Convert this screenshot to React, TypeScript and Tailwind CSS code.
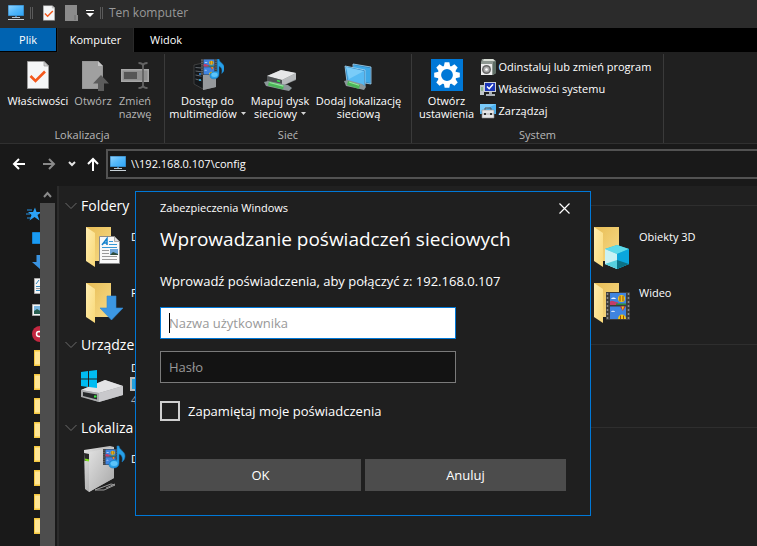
import React from 'react';

type IconProps = { className?: string };

/* ---------- Shared glyphs ---------- */

function Monitor({ className }: IconProps) {
  return (
    <svg viewBox="0 0 16 16" className={className} aria-hidden="true">
      <defs>
        <linearGradient id="screen" x1="0" y1="0" x2="1" y2="1">
          <stop offset="0" stopColor="#8fd3ff" />
          <stop offset="0.5" stopColor="#52b8fb" />
          <stop offset="1" stopColor="#2ea4f5" />
        </linearGradient>
      </defs>
      <path d="M0 0h16v11H0z" fill="#2b6ea3" />
      <path d="M.5 .5h15v10H.5z" fill="url(#screen)" />
      <path d="M7 11h2v1.5H7z" fill="#3d7fb0" />
      <path d="M4 12h8v1H4z" fill="#b7c4cc" />
      <path d="M0 14h16v1H0z" fill="#c9d2d8" />
    </svg>
  );
}

function CheckedPage({ className }: IconProps) {
  return (
    <svg viewBox="0 0 22 28" className={className} aria-hidden="true">
      <path d="M.5 .5H17l4.500 4.500V27.500H.5z" fill="#f5f6f7" stroke="#9a9a9a" />
      <path d="M17 .5V5h4.500z" fill="#cfcfcf" stroke="#9a9a9a" strokeWidth=".7" />
      <path d="M3.500 15l5 5 9.500-9.500" fill="none" stroke="#f4581c" strokeWidth="2.600" />
    </svg>
  );
}

function MusicNote({ x, y, s }: { x: number; y: number; s: number }) {
  return (
    <g transform={`translate(${x} ${y}) scale(${s})`}>
      <path
        d="M8 0h2c0 4 6 5 6 10 0 3-1.500 5-3 6 1-4 0-7-3-8v9c0 3-2 5-5.500 5C2 22 0 21 0 18.500 0 16 2.500 14 6 14c1 0 1.500 0 2 .3z"
        fill="#27a0e8"
        stroke="#1477bd"
        strokeWidth=".6"
      />
      <ellipse cx="5" cy="17.500" rx="3.500" ry="2.500" fill="#5cc4fa" />
    </g>
  );
}

function FilmStrip({ x, y, w, h }: { x: number; y: number; w: number; h: number }) {
  return (
    <svg x={x} y={y} width={w} height={h} viewBox="0 0 24 28" preserveAspectRatio="none">
      <path d="M0 0h24v28H0z" fill="#3c3c3c" />
      <path d="M1.500 1v27M22.500 1v27" stroke="#8b8b8b" strokeWidth="1.500" strokeDasharray="2 2" />
      <path d="M4 1h16v12H4zM4 14.500h16V27H4z" fill="#3f84e0" />
      <path d="M4 9.500c2-2 4 0 8 1v2.500H4z" fill="#c33d6a" />
      <path d="M10 11.500h10V13H10z" fill="#2d8a3b" />
      <path d="M5 7c1-2 4-2 5 0z" fill="#e8f2ff" />
      <circle cx="15.500" cy="6.500" r="3.500" fill="#f1c518" />
      <path d="M14 3.800v5.400M17 3.800v5.400" stroke="#8a3a10" strokeWidth=".9" />
      <path d="M14 14.500h5.500l-2.700 4.500z" fill="#c92a2a" />
      <path d="M15.500 14.500h2.500l-1.200 4z" fill="#f1c518" />
      <path d="M12 27c0-6 8-6 8 0z" fill="#f1c518" />
      <path d="M14.500 23.500V27M17.500 23.500V27" stroke="#8a3a10" strokeWidth=".9" />
      <path d="M5 20c1-2 4-1 4 0z" fill="#cfe2fb" />
    </svg>
  );
}

/* ---------- Ribbon icons (32 x 32) ---------- */

function RibbonSvg({ children }: { children: React.ReactNode }) {
  return (
    <svg viewBox="0 0 32 32" className="size-8 shrink-0" aria-hidden="true">
      {children}
    </svg>
  );
}

const PropertiesIcon = () => (
  <span className="flex h-8 items-start pt-0.5">
    <CheckedPage className="h-7 w-[22px]" />
  </span>
);

const OpenIcon = () => (
  <RibbonSvg>
    <path d="M5 2h16l5 5v23H5z" fill="#8c8c8c" />
    <path d="M5.500 2.500H21V7h4.500v22.500h-20z" fill="#a0a0a0" />
    <path d="M21 2v5h5z" fill="#c6c6c6" />
    <path d="M24 16l8 8.500h-5V32h-6v-7.500h-5z" fill="#5c5c5c" />
  </RibbonSvg>
);

const RenameIcon = () => (
  <RibbonSvg>
    <path d="M2 10h28v13H2z" fill="#a8a8a8" />
    <path d="M3.500 11.500h25v10h-25z" fill="#909090" />
    <path d="M5 13h13v7H5z" fill="#565656" />
    <path d="M19.500 4c3 0 4.500 1 4.500 3 0-2 1.500-3 4.500-3M24 6v21M19.500 29c3 0 4.500-1 4.500-3 0 2 1.500 3 4.500 3" fill="none" stroke="#646464" strokeWidth="1.800" />
  </RibbonSvg>
);

const MediaIcon = () => (
  <RibbonSvg>
    <path d="M2 6l9-2v26L2 25z" fill="#15181b" stroke="#555" strokeWidth=".6" />
    <path d="M11 4l13 1v23l-13 3z" fill="#777a7d" />
    <path d="M11 16l13-1v13l-13 3z" fill="#96999c" />
    <path d="M3.500 8.500l6 .5M3.500 12l6 .8M3.500 16l6 1.200M3.500 20l6 1.800" stroke="#62686e" />
    <circle cx="8" cy="21" r="1" fill="#2dbcf5" />
    <circle cx="8" cy="15" r="1" fill="#2d8ff5" />
    <FilmStrip x={9} y={0} w={16} h={16} />
    <MusicNote x={18} y={0} s={0.9} />
  </RibbonSvg>
);

const MapDriveIcon = () => (
  <RibbonSvg>
    <path d="M3 17l14-6 15 3v7l-14 6-15-4z" fill="#8c8f91" />
    <path d="M3 17l14-6 15 3-14 7z" fill="#e6e7e8" />
    <path d="M3 17l15 4v6L3 23z" fill="#4f5254" />
    <path d="M18 21l14-7v6l-14 7z" fill="#b7babc" />
    <path d="M13 21.500l3 1" stroke="#34e34a" strokeWidth="1.500" />
    <path d="M0 23l4-1 20 4 4 3-3 3-5-1-18-4z" fill="#8c979a" />
    <path d="M5 22.500l15 4-1 4-15-4z" fill="#4bb558" />
    <path d="M5.500 23.500l14 3.600" stroke="#93e79b" strokeWidth="1.200" />
  </RibbonSvg>
);

const AddLocationIcon = () => (
  <RibbonSvg>
    <path d="M10 5l18 3v17l-18-3z" fill="#2a79b3" stroke="#a5d8f5" strokeWidth=".8" />
    <path d="M11 6l16 3v15l-16-4z" fill="#3ea8e6" />
    <path d="M2 7l20 4v17L4 23z" fill="#2a79b3" stroke="#a5d8f5" strokeWidth=".8" />
    <path d="M3 8l18 4v14L5 22z" fill="#56baf3" />
    <path d="M3 8l18 4-15 8z" fill="#7accf8" />
    <path d="M1 22l4-1 14 4 4 3-2 3-4-1-14-3z" fill="#8c979a" />
    <path d="M5 22l12 4-1 4-12-4z" fill="#4bb558" />
    <path d="M6 23l10 3.300" stroke="#93e79b" strokeWidth="1.200" />
  </RibbonSvg>
);

const SettingsIcon = () => (
  <RibbonSvg>
    <path d="M0 0h32v32H0z" fill="#0078d7" />
    <g transform="translate(16 16)" fill="#fff">
      {[0, 45, 90, 135, 180, 225, 270, 315].map((a) => (
        <path key={a} d="M-3.200-8.500L-2.300-12.800h4.600L3.200-8.500z" transform={`rotate(${a})`} />
      ))}
    </g>
    <circle cx="16" cy="16" r="7.700" fill="none" stroke="#fff" strokeWidth="3.600" />
  </RibbonSvg>
);

const UninstallIcon = () => (
  <svg viewBox="0 0 16 16" className="size-4 shrink-0" aria-hidden="true">
    <path d="M2 0h11l3 2v12l-3 2H1V3z" fill="#8d9690" />
    <path d="M4 0h9l2 2H3z" fill="#d9ded6" />
    <path d="M13 3l3-1v12l-3 2z" fill="#5f6e66" />
    <path d="M1 5h11v11H1z" fill="#ededed" />
    <circle cx="6.500" cy="10.500" r="4.500" fill="#666" />
    <circle cx="6.500" cy="10.500" r="3" fill="#aaa" />
    <circle cx="6.500" cy="10.500" r="1.300" fill="#fff" />
  </svg>
);

const SystemIcon = () => (
  <svg viewBox="0 0 16 16" className="size-4 shrink-0" aria-hidden="true">
    <path d="M0 4h4v10H0z" fill="#bfc5c9" />
    <path d="M1 7h2M1 9h2" stroke="#59a847" />
    <path d="M4 1h12v10H4z" fill="#c9ced6" />
    <path d="M5 2h10v8H5z" fill="#1a35b8" />
    <path d="M7 5.500l2.200 2.200L13 3.300" fill="none" stroke="#fff" strokeWidth="1.500" />
    <path d="M9 11h3v2H9zM6 13h9v2H6z" fill="#aab0b6" />
  </svg>
);

const ManageIcon = () => (
  <svg viewBox="0 0 16 16" className="size-4 shrink-0" aria-hidden="true">
    <path d="M0 1h16v10H0z" fill="#4cb2f3" />
    <path d="M0 1h16L0 9z" fill="#79cafa" />
    <path d="M5 7V5h6v2" fill="none" stroke="#555" />
    <path d="M2 7h12v8H2z" fill="#e5e6e7" stroke="#8e8e8e" strokeWidth=".6" />
    <path d="M4 10h2v2H4zM10 10h2v2h-2z" fill="#333" />
    <path d="M2 11h2M6 11h4M12 11h2" stroke="#8c8c8c" strokeWidth=".6" />
  </svg>
);

/* ---------- Content icons (48 x 48) ---------- */

function Folder({ children }: { children?: React.ReactNode }) {
  return (
    <svg viewBox="0 0 48 48" className="size-12 shrink-0" aria-hidden="true">
      <defs>
        <linearGradient id="folderBack" x1="0" y1="0" x2="1" y2="1">
          <stop offset="0" stopColor="#e8bd55" />
          <stop offset="1" stopColor="#f7db89" />
        </linearGradient>
        <linearGradient id="folderFront" x1="0" y1="0" x2="1" y2="1">
          <stop offset="0" stopColor="#ffedb0" />
          <stop offset="1" stopColor="#f9d978" />
        </linearGradient>
      </defs>
      <path d="M6 4h25v34H6z" fill="url(#folderBack)" />
      <path d="M6 4l9 6v34l-9-6z" fill="url(#folderFront)" />
      {children}
    </svg>
  );
}

const DocumentsIcon = () => (
  <Folder>
    <path d="M19.500 13.500h15l5 5v22h-20z" fill="#f8f8f8" stroke="#8b8b8b" />
    <path d="M34.500 13.500v5h5z" fill="#ddd" stroke="#8b8b8b" strokeWidth=".7" />
    <path d="M22 22l5-6.500V22M23.500 20H27" fill="none" stroke="#1180cc" strokeWidth="1.500" />
    <path d="M29 18.500h4M29 21.500h8M22 24.500h15" stroke="#3597d4" />
    <path d="M22 27.500h7M22 30.500h7M22 33.500h15M22 36.500h15" stroke="#999" />
    <path d="M30 26h8v6h-8z" fill="#6fa6da" />
    <path d="M30 32l3-3 5 2v1z" fill="#2d4c3c" />
  </Folder>
);

const DownloadsIcon = () => (
  <Folder>
    <path d="M27 17h9v12h7L31.500 41 20 29h7z" fill="#3c97e3" stroke="#2f86d3" strokeWidth=".6" />
  </Folder>
);

const ObjectsIcon = () => (
  <Folder>
    <path d="M17 26l12-4 12 4v15l-12 5-12-5z" fill="#22b4cf" />
    <path d="M17 26l12-4 12 4-12 5z" fill="#5edaea" />
    <path d="M17 26l12 5v15l-12-5z" fill="#c9f1f4" />
    <path d="M29 31l12-5v15l-12 5z" fill="#0aa6dd" />
    <path d="M17 41l12-4v9z" fill="#56cfde" />
    <path d="M29 37l12 4-12 5z" fill="#0b7286" />
  </Folder>
);

const VideosIcon = () => (
  <Folder>
    <FilmStrip x={18} y={13} w={24} h={28} />
  </Folder>
);

const DriveIcon = () => (
  <svg viewBox="0 0 48 48" className="size-12 shrink-0" aria-hidden="true">
    <path d="M1 30l24-10 18 6v9L19 42 1 36z" fill="#9b9d9e" />
    <path d="M1 30l24-10 18 6-24 7z" fill="#e3e3e5" />
    <path d="M19 33l24-7v9l-24 7z" fill="#c9c9cc" />
    <path d="M1 30l18 3v9L1 37z" fill="#aaabad" />
    <path d="M3 32l14 2.500v5L3 36z" fill="#27292b" />
    <path d="M14 36.500h2.500" stroke="#38ed42" strokeWidth="2" />
    <path d="M1 12l7-1v7.500H1zM9 11l8-1v8.500H9zM1 19.500h7V27l-7-1zM9 19.500h8V28l-8-1z" fill="#00bcf2" />
  </svg>
);

const MediaServerIcon = () => (
  <svg viewBox="0 0 48 48" className="size-12 shrink-0" aria-hidden="true">
    <defs>
      <linearGradient id="server" x1="0" y1="0" x2="1" y2="1">
        <stop offset="0" stopColor="#e3e3e3" />
        <stop offset="1" stopColor="#8d8d8d" />
      </linearGradient>
      <linearGradient id="serverFace" x1="0" y1="0" x2="1" y2="1">
        <stop offset="0" stopColor="#e2e2e2" />
        <stop offset="1" stopColor="#a6a6a6" />
      </linearGradient>
    </defs>
    <path d="M15 45l16-6 4 1-11 5zM26 43l9-4" fill="none" stroke="#9b9b9b" />
    <path d="M4 5l26-4 4 1v31L9 47l-4-3z" fill="url(#server)" />
    <path d="M9 7l25-5v31L9 47z" fill="url(#serverFace)" />
    <path d="M4 8l5 1v7H4.500z" fill="#292929" />
    <path d="M5 14.500l4 1" stroke="#81e51f" strokeWidth="2" />
    <FilmStrip x={23} y={4} w={15} h={16} />
    <MusicNote x={29} y={1} s={1} />
  </svg>
);

/* ---------- Title bar and tabs ---------- */

const Grip = () => <span className="h-3 w-[3px] border-x border-[#5a5a5a]" />;

function TitleBar() {
  return (
    <header className="flex h-7 shrink-0 items-center bg-[#2b2b2b] pb-0.5 pl-2 text-[#999]">
      <Monitor className="mr-1.5 size-4" />
      <Grip />
      <button aria-label="Właściwości" className="ml-2.5">
        <CheckedPage className="h-4 w-3" />
      </button>
      <button aria-label="Nowy folder" className="ml-2.5">
        <svg viewBox="0 0 13 16" className="h-4 w-[13px]">
          <path d="M0 0h12v10h1v6H0z" fill="#8b8b8b" />
          <path d="M10 10v5" stroke="#6d6d6d" />
        </svg>
      </button>
      <button aria-label="Dostosuj pasek narzędzi" className="ml-2">
        <svg viewBox="0 0 8 8" className="size-2">
          <path d="M0 1.500h8" stroke="#fff" />
          <path d="M0 4h8L4 8z" fill="#fff" />
        </svg>
      </button>
      <span className="mx-1.5 flex">
        <Grip />
      </span>
      <h1 className="text-xs leading-4">Ten komputer</h1>
    </header>
  );
}

function Tabs() {
  return (
    <nav className="flex h-6 shrink-0 bg-black text-[11px] leading-6">
      <button className="h-[23px] w-14 bg-[#0063b1]">Plik</button>
      <button className="ml-px w-[77px] border-x border-[#2a2a2a] bg-[#202020]">Komputer</button>
      <button className="w-16">Widok</button>
    </nav>
  );
}

/* ---------- Ribbon ---------- */

type BigButtonProps = {
  icon: React.ReactNode;
  lines: string[];
  width: string;
  menu?: boolean;
  disabled?: boolean;
};

function BigButton({ icon, lines, width, menu, disabled }: BigButtonProps) {
  return (
    <button
      disabled={disabled}
      className={`flex flex-col items-center whitespace-nowrap pt-[3px] ${width} ${disabled ? 'text-[#b5b5b5]' : 'text-white'}`}
    >
      {icon}
      <span className="mt-[3px] flex flex-col items-center leading-[13px]">
        {lines.map((line, i) => (
          <span key={line} className="flex items-center gap-1">
            {line}
            {menu && i === lines.length - 1 && (
              <svg viewBox="0 0 5 3" className="h-[3px] w-[5px]" aria-hidden="true">
                <path d="M0 0h5L2.500 3z" fill="#d5d5d5" />
              </svg>
            )}
          </span>
        ))}
      </span>
    </button>
  );
}

function SmallButton({ icon, label }: { icon: React.ReactNode; label: string }) {
  return (
    <button className="flex h-[22px] items-center gap-[3px] whitespace-nowrap">
      {icon}
      {label}
    </button>
  );
}

function RibbonGroup({ label, width, children }: { label: string; width: string; children: React.ReactNode }) {
  return (
    <section className={`flex shrink-0 flex-col border-r border-[#3a3a3a] ${width}`}>
      <div className="flex h-[74px] justify-center pr-1 pt-0.5">{children}</div>
      <h2 className="text-center leading-4 text-[#b8b8b8]">{label}</h2>
    </section>
  );
}

function Ribbon() {
  return (
    <div className="flex h-[92px] shrink-0 border-b border-[#303030] bg-[#202020] pt-0.5 text-[11px]">
      <RibbonGroup label="Lokalizacja" width="w-[165px]">
        <BigButton icon={<PropertiesIcon />} lines={['Właściwości']} width="w-[68px]" />
        <BigButton icon={<OpenIcon />} lines={['Otwórz']} width="w-[42px]" disabled />
        <BigButton icon={<RenameIcon />} lines={['Zmień', 'nazwę']} width="w-[42px]" disabled />
      </RibbonGroup>
      <RibbonGroup label="Sieć" width="w-[247px]">
        <BigButton icon={<MediaIcon />} lines={['Dostęp do', 'multimediów']} width="w-[79px]" menu />
        <BigButton icon={<MapDriveIcon />} lines={['Mapuj dysk', 'sieciowy']} width="w-[66px]" menu />
        <BigButton icon={<AddLocationIcon />} lines={['Dodaj lokalizację', 'sieciową']} width="w-[91px]" />
      </RibbonGroup>
      <RibbonGroup label="System" width="w-[252px]">
        <BigButton icon={<SettingsIcon />} lines={['Otwórz', 'ustawienia']} width="w-[66px]" />
        <div className="flex w-[178px] flex-col">
          <SmallButton icon={<UninstallIcon />} label="Odinstaluj lub zmień program" />
          <SmallButton icon={<SystemIcon />} label="Właściwości systemu" />
          <SmallButton icon={<ManageIcon />} label="Zarządzaj" />
        </div>
      </RibbonGroup>
    </div>
  );
}

/* ---------- Address bar ---------- */

function AddressBar() {
  return (
    <div className="flex h-[42px] shrink-0 items-center bg-[#191919] pb-0.5 pl-3">
      <button aria-label="Wstecz">
        <svg viewBox="0 0 14 14" className="size-3.5" fill="none" stroke="#fff" strokeWidth="2">
          <path d="M13 7H2M7 2L2 7l5 5" />
        </svg>
      </button>
      <button aria-label="Do przodu" className="ml-4">
        <svg viewBox="0 0 14 14" className="size-3.5" fill="none" stroke="#8a8a8a" strokeWidth="2">
          <path d="M1 7h11M7 2l5 5-5 5" />
        </svg>
      </button>
      <button aria-label="Ostatnie lokalizacje" className="ml-3">
        <svg viewBox="0 0 8 8" className="size-2" fill="none" stroke="#e5e5e5" strokeWidth="2">
          <path d="M1 2l3 3 3-3" />
        </svg>
      </button>
      <button aria-label="W górę" className="ml-2.5">
        <svg viewBox="0 0 14 14" className="size-3.5" fill="none" stroke="#fff" strokeWidth="2">
          <path d="M7 14V2M2 7l5-5 5 5" />
        </svg>
      </button>
      <div className="ml-1.5 flex h-[30px] flex-1 items-center gap-[5px] border-2 border-r-0 border-[#525252] pl-0.5">
        <Monitor className="size-4 shrink-0" />
        <input
          aria-label="Adres"
          defaultValue="\\192.168.0.107\config"
          className="min-w-0 flex-1 bg-transparent text-[11px] leading-4 outline-none"
        />
      </div>
    </div>
  );
}

/* ---------- Navigation tree ---------- */

const treeIcons: React.ReactNode[] = [
  <g key="a">
    <path d="M11 1.500l1.500 4.500H18l-4.500 3 2 5.500-5-3.500-5 3.500 2-5.500L4 6h5z" fill="#2ba3f7" />
    <path d="M3 4h5M2 8h4M3 12h4" stroke="#2493e4" />
  </g>,
  <path key="b" d="M8.500 2.500h12v11h-12z" fill="#1a9bf3" stroke="#1483d3" />,
  <path key="c" d="M12.500 1h7v7h4L16 15 8 8h4.500z" fill="#3a93e0" />,
  <g key="d">
    <path d="M10.500 .5H22v15H10.500z" fill="#f4f4f4" stroke="#aaa" />
    <path d="M12 6l3-4M12 8.500h6M12 12.500h6" stroke="#3187bd" />
    <path d="M12 10.500h6" stroke="#999" />
  </g>,
  <g key="e">
    <path d="M8.500 2.500H22v11H8.500z" fill="#f4f4f4" stroke="#aaa" />
    <path d="M10 4h8v8h-8z" fill="#78b5e0" />
    <path d="M10 9l3-2 5 3v2h-8z" fill="#295e50" />
  </g>,
  <g key="f">
    <circle cx="16" cy="8" r="8" fill="#c42740" />
    <circle cx="15" cy="8" r="2.500" fill="none" stroke="#fff" strokeWidth="1.500" />
  </g>,
];

const treeFolder = (
  <g>
    <path d="M10 0h12v16H10z" fill="#f5c83f" />
    <path d="M11 1.500h11v13H11z" fill="#ffe694" />
  </g>
);

function NavigationTree() {
  const rows = [...treeIcons, ...Array.from({ length: 8 }, () => treeFolder)];
  return (
    <aside className="flex w-[55px] shrink-0 bg-[#191919]">
      <ul className="w-10 overflow-hidden pl-6 pt-4">
        {rows.map((icon, i) => (
          <li key={i} className="flex h-6 items-center">
            <svg viewBox="0 0 16 16" className="size-4 shrink-0 overflow-visible" aria-hidden="true">
              {icon}
            </svg>
          </li>
        ))}
      </ul>
      <div className="flex w-[15px] flex-col">
        <svg viewBox="0 0 15 17" className="h-[17px] w-[15px]" fill="none" stroke="#8a8a8a" strokeWidth="2" aria-hidden="true">
          <path d="M4 11l3.500-4 3.500 4" />
        </svg>
        <div className="flex-1 bg-[#4d4d4d]" />
      </div>
    </aside>
  );
}

/* ---------- Folder view ---------- */

function Group({ title, children }: { title: string; children: React.ReactNode }) {
  return (
    <section>
      <h2 className="flex h-[27px] items-center gap-1 text-[14px] leading-5">
        <svg viewBox="0 0 12 8" className="h-2 w-3" fill="none" stroke="#6a6a6a" aria-hidden="true">
          <path d="M.5 1L6 6.500 11.500 1" />
        </svg>
        {title}
        <span className="ml-2 h-px flex-1 bg-[#2e2e2e]" />
      </h2>
      <div className="grid grid-cols-[254px_254px_1fr] pl-3">{children}</div>
    </section>
  );
}

function Tile({ icon, label, place = 'col-start-1' }: { icon: React.ReactNode; label: string; place?: string }) {
  return (
    <div className={`flex h-14 gap-[3px] pl-[3px] pt-1 text-[11px] leading-4 ${place}`}>
      {icon}
      <span className="pt-1.5">{label}</span>
    </div>
  );
}

function FolderView() {
  return (
    <main className="ml-0.5 min-w-0 flex-1 overflow-hidden border-l-2 border-[#2b2b2b] bg-[#202020] pl-1.5 pt-1.5">
      <Group title="Foldery">
        <Tile icon={<DocumentsIcon />} label="D" />
        <Tile icon={<ObjectsIcon />} label="Obiekty 3D" place="col-start-3" />
        <Tile icon={<DownloadsIcon />} label="P" />
        <Tile icon={<VideosIcon />} label="Wideo" place="col-start-3" />
      </Group>
      <Group title="Urządze">
        <div className="flex h-14 gap-[3px] pl-[3px] pt-0.5 text-[11px] leading-4">
          <DriveIcon />
          <div className="flex flex-col">
            <span>D</span>
            <span className="-ml-px my-px h-[14px] w-48 border-2 border-[#bcbcbc] bg-[#26a0da]" />
            <span className="text-[#a8a8a8]">4</span>
          </div>
        </div>
      </Group>
      <Group title="Lokaliza">
        <Tile icon={<MediaServerIcon />} label="D" />
      </Group>
    </main>
  );
}

/* ---------- Credentials dialog ---------- */

function CredentialsDialog() {
  return (
    <form
      role="dialog"
      aria-labelledby="dialog-title"
      onSubmit={(e) => e.preventDefault()}
      className="absolute left-[135px] top-[191px] w-[456px] border border-[#0078d7] bg-[#1f1f1f] px-6 pb-6 text-[13px] leading-5"
    >
      <div className="-mr-3 flex h-8 items-center justify-between text-[11px]">
        <span>Zabezpieczenia Windows</span>
        <button type="button" aria-label="Zamknij" className="p-2">
          <svg viewBox="0 0 11 11" className="size-[11px]" stroke="#fff" strokeWidth="1.200">
            <path d="M.5 .5l10 10M10.500 .5l-10 10" />
          </svg>
        </button>
      </div>
      <h2 id="dialog-title" className="text-[19px] leading-[30px]">
        Wprowadzanie poświadczeń sieciowych
      </h2>
      <p className="mt-[17px]">Wprowadź poświadczenia, aby połączyć z: 192.168.0.107</p>
      <div className="relative mt-4 w-[296px]">
        <input
          aria-label="Nazwa użytkownika"
          placeholder="Nazwa użytkownika"
          className="block h-8 w-full border border-[#0078d7] bg-white px-2 text-black outline-none placeholder:text-[#999]"
        />
        <span className="absolute left-[9px] top-1.5 h-5 w-px bg-black" />
      </div>
      <input
        type="password"
        aria-label="Hasło"
        placeholder="Hasło"
        className="mt-3 block h-8 w-[296px] border border-[#7a7a7a] bg-[#131313] px-2 outline-none placeholder:text-[#999]"
      />
      <label className="mt-[18px] flex w-fit items-center gap-2">
        <input type="checkbox" className="size-5 appearance-none border-2 border-[#cfcfcf]" />
        Zapamiętaj moje poświadczenia
      </label>
      <div className="mt-[38px] grid grid-cols-2 gap-1">
        <button className="h-8 bg-[#4c4c4c]">OK</button>
        <button type="button" className="h-8 bg-[#4c4c4c]">
          Anuluj
        </button>
      </div>
    </form>
  );
}

export default function App() {
  return (
    <div className="relative flex h-screen flex-col overflow-hidden bg-[#191919] font-['Open_Sans','Noto_Sans',sans-serif] text-white">
      <TitleBar />
      <Tabs />
      <Ribbon />
      <AddressBar />
      <div className="flex min-h-0 flex-1">
        <NavigationTree />
        <FolderView />
      </div>
      <CredentialsDialog />
    </div>
  );
}
